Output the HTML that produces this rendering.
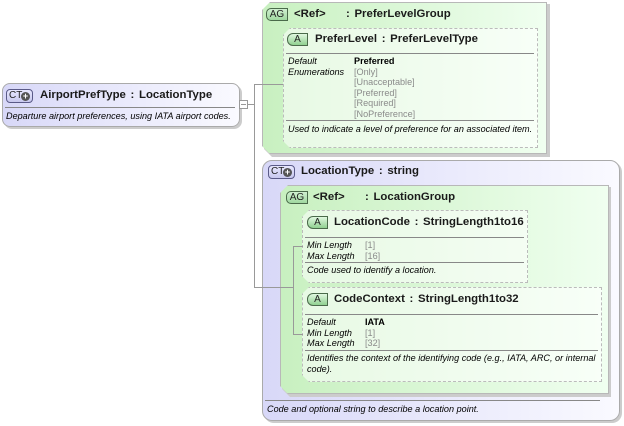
<!DOCTYPE html>
<html><head><meta charset="utf-8"><style>
*{margin:0;padding:0;box-sizing:border-box}
body{width:624px;height:426px;background:#fff;position:relative;overflow:hidden;font-family:"Liberation Sans",Arial,sans-serif;color:#000}
.a{position:absolute}
.t{position:absolute;font-weight:bold;font-size:11.4px;white-space:nowrap;color:#1a1a1a;word-spacing:1.5px}
.s{position:absolute;font-size:9.1px;white-space:nowrap;line-height:10.6px}
.i{font-style:italic}
.g{color:#8a8a8a}
.ct{position:absolute;width:27px;height:14px;border:1px solid #5a5a88;border-radius:4px;background:linear-gradient(#e8e8ff,#c8c8ee);font-size:10px;line-height:12px;padding-left:2px;color:#222}
.ct b{position:absolute;right:2px;top:2px;width:9px;height:9px;border-radius:50%;background:#555;color:#fff;font-size:9px;line-height:9px;text-align:center;font-weight:bold}
.ag{position:absolute;width:22px;height:13px;border:1px solid #4a6a4a;border-radius:5px 0 0 5px;background:linear-gradient(#d0f0d0,#a0d8a0);font-size:10px;line-height:11px;text-align:center;color:#222}
.ab{position:absolute;width:21px;height:13px;border:1px solid #4a6a4a;border-radius:6px 0 0 6px;background:linear-gradient(#e0f8e0,#90d090);font-size:10px;line-height:11px;text-align:center;color:#222}
.hl{position:absolute;height:1px;background:#999}
.vl{position:absolute;width:1px;background:#999}
.agbox{position:absolute;background:linear-gradient(90deg,#c8f0c0,#f0fff0);border:1px solid #b8b8b8;clip-path:polygon(8px 0,100% 0,100% 100%,8px 100%,0 calc(100% - 8px),0 8px);}
.att{position:absolute;border:1.5px dashed #bbb;background:rgba(255,255,255,0.55);clip-path:polygon(7px 0,100% 0,100% 100%,7px 100%,0 calc(100% - 7px),0 7px)}
</style></head><body>

<!-- left CT box -->
<div class="a" style="left:2px;top:83px;width:238px;height:44px;border:1px solid #aaa;border-radius:8px;background:linear-gradient(90deg,#d8d8f8,#fafaff);box-shadow:2px 2px 0 #ccc"></div>
<div class="ct" style="left:6px;top:89px">CT<b>+</b></div>
<div class="t" style="left:40px;top:89px">AirportPrefType : LocationType</div>
<div class="hl" style="left:5px;top:107px;width:230px;background:#888"></div>
<div class="s i" style="left:6px;top:111px">Departure airport preferences, using IATA airport codes.</div>
<div class="a" style="left:239px;top:100px;width:9px;height:9px;border:1px solid #999;background:#fff"></div>
<div class="hl" style="left:241px;top:104px;width:5px"></div>
<div class="hl" style="left:248px;top:104px;width:7px"></div>
<div class="vl" style="left:254px;top:84px;height:204px"></div>
<div class="hl" style="left:254px;top:84px;width:30px"></div>

<!-- AG 1 -->
<div class="a" style="left:264px;top:4px;width:286px;height:153px;background:#ccc;clip-path:polygon(8px 0,100% 0,100% 100%,8px 100%,0 calc(100% - 8px),0 8px)"></div>
<div class="agbox" style="left:262px;top:2px;width:285px;height:152px"></div>
<div class="hl" style="left:262px;top:84px;width:22px"></div>
<div class="ag" style="left:266px;top:8px">AG</div>
<div class="t" style="left:294px;top:8px">&lt;Ref&gt;</div>
<div class="t" style="left:346px;top:8px">: PreferLevelGroup</div>
<div class="att" style="left:283px;top:28px;width:255px;height:120px"></div>
<div class="ab" style="left:287px;top:33px">A</div>
<div class="t" style="left:315px;top:33px">PreferLevel : PreferLevelType</div>
<div class="hl" style="left:286px;top:53px;width:248px;background:#888"></div>
<div class="s i" style="left:288px;top:56px">Default<br>Enumerations</div>
<div class="s" style="left:354px;top:56px;font-weight:bold">Preferred</div>
<div class="s g" style="left:354px;top:66.6px">[Only]<br>[Unacceptable]<br>[Preferred]<br>[Required]<br>[NoPreference]</div>
<div class="hl" style="left:286px;top:120px;width:248px;background:#888"></div>
<div class="s i" style="left:288px;top:124px">Used to indicate a level of preference for an associated item.</div>

<!-- LocationType CT -->
<div class="a" style="left:262px;top:160px;width:358px;height:261px;border:1px solid #aaa;border-radius:10px;background:linear-gradient(90deg,#d8d8f8,#fafaff);box-shadow:2px 2px 0 #ccc"></div>
<div class="ct" style="left:268px;top:165px">CT<b>+</b></div>
<div class="t" style="left:301px;top:165px">LocationType : string</div>
<div class="a" style="left:282px;top:187px;width:329px;height:210px;background:#ccc;clip-path:polygon(8px 0,100% 0,100% 100%,8px 100%,0 calc(100% - 8px),0 8px)"></div>
<div class="agbox" style="left:280px;top:185px;width:329px;height:209px"></div>
<div class="hl" style="left:254px;top:287px;width:39px"></div>
<div class="ag" style="left:286px;top:191px">AG</div>
<div class="t" style="left:313px;top:191px">&lt;Ref&gt;</div>
<div class="t" style="left:365px;top:191px">: LocationGroup</div>

<div class="att" style="left:302px;top:210px;width:226px;height:73px"></div>
<div class="ab" style="left:307px;top:216px">A</div>
<div class="t" style="left:334px;top:216px">LocationCode : StringLength1to16</div>
<div class="hl" style="left:305px;top:237px;width:219px;background:#888"></div>
<div class="s i" style="left:307px;top:240px">Min Length<br>Max Length</div>
<div class="s g" style="left:365px;top:240px">[1]<br>[16]</div>
<div class="hl" style="left:305px;top:262px;width:219px;background:#888"></div>
<div class="s i" style="left:307px;top:265px">Code used to identify a location.</div>

<div class="att" style="left:302px;top:287px;width:300px;height:95px"></div>
<div class="ab" style="left:307px;top:293px">A</div>
<div class="t" style="left:334px;top:293px">CodeContext : StringLength1to32</div>
<div class="hl" style="left:305px;top:314px;width:293px;background:#888"></div>
<div class="s i" style="left:307px;top:317px">Default<br>Min Length<br>Max Length</div>
<div class="s" style="left:365px;top:317px;font-weight:bold">IATA</div>
<div class="s g" style="left:365px;top:327.6px">[1]<br>[32]</div>
<div class="hl" style="left:305px;top:350px;width:293px;background:#888"></div>
<div class="s i" style="left:307px;top:353px;white-space:normal;width:293px">Identifies the context of the identifying code (e.g., IATA, ARC, or internal code).</div>

<div class="vl" style="left:293px;top:246px;height:89px"></div>
<div class="hl" style="left:293px;top:246px;width:10px"></div>
<div class="hl" style="left:293px;top:334px;width:10px"></div>

<div class="hl" style="left:265px;top:400px;width:335px;background:#888"></div>
<div class="s i" style="left:267px;top:404px">Code and optional string to describe a location point.</div>
</body></html>
